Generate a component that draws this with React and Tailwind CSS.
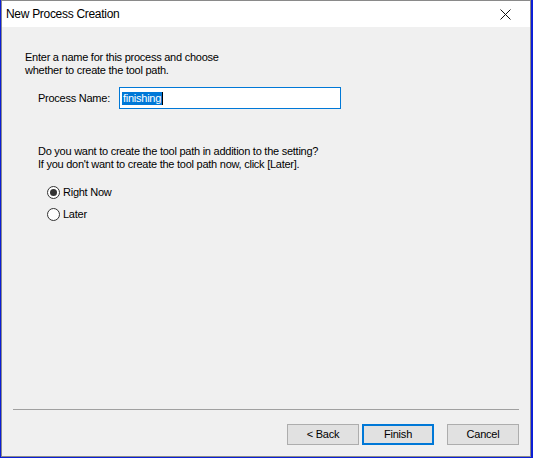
import { useState } from "react";

function Radio({ checked, label, onClick }) {
  return (
    <div className="flex items-center gap-[3px] cursor-default" onClick={onClick}>
      <span className="w-[13px] h-[13px] rounded-full border border-[#333] bg-white flex items-center justify-center">
        {checked && <span className="w-[7px] h-[7px] rounded-full bg-[#333]" />}
      </span>
      <span>{label}</span>
    </div>
  );
}

function Btn({ children, primary }) {
  return (
    <button
      className={
        "w-[72px] h-[21px] bg-[#e1e1e1] text-[#000] flex items-center justify-center " +
        (primary ? "border-2 border-[#0078d7]" : "border border-[#adadad]")
      }
    >
      {children}
    </button>
  );
}

export default function App() {
  const [mode, setMode] = useState("now");

  return (
    <div className="w-[533px] h-[458px] bg-[#0b1ed6] pl-[1px] pr-[2px] pb-[1px] flex">
      <div
        className="flex-1 flex flex-col border border-[#8a8a8a] bg-[#f0f0f0] text-[12px] text-black"
        style={{ fontFamily: '"Liberation Sans", Arial, sans-serif' }}
      >
        {/* title bar */}
        <div className="h-[26px] bg-white flex items-center justify-between pl-[4px] pr-[19px] shrink-0">
          <span className="text-[12px] tracking-[-0.3px] text-[#000]">New Process Creation</span>
          <svg width="11" height="11" viewBox="0 0 11 11" className="mt-[1px]">
            <path d="M0.5 0.5 L10.5 10.5 M10.5 0.5 L0.5 10.5" stroke="#111" strokeWidth="1" />
          </svg>
        </div>

        {/* body */}
        <div className="flex-1 flex flex-col pl-[23px] pt-[24px] leading-[13px] text-[11px] tracking-[-0.25px]">
          <p>Enter a name for this process and choose</p>
          <p>whether to create the tool path.</p>

          <div className="flex items-center mt-[10px] pl-[13px]">
            <span className="w-[81px]">Process Name:</span>
            <div className="w-[222px] h-[22px] border border-[#0078d7] bg-white flex items-center pl-[2px]">
              <span className="bg-[#0078d7] text-white px-[1px] leading-[13px]">finishing</span>
              <span className="w-[1px] h-[13px] bg-black" />
            </div>
          </div>

          <div className="pl-[13px] mt-[36px]">
            <p>Do you want to create the tool path in addition to the setting?</p>
            <p>If you don't want to create the tool path now, click [Later].</p>
          </div>

          <div className="pl-[22px] mt-[15px] flex flex-col gap-[9px]">
            <Radio checked={mode === "now"} label="Right Now" onClick={() => setMode("now")} />
            <Radio checked={mode === "later"} label="Later" onClick={() => setMode("later")} />
          </div>
        </div>

        {/* footer */}
        <div className="shrink-0 px-[11px]">
          <div className="h-[2px] border-t border-[#a0a0a0] border-b-white" />
        </div>
        <div className="shrink-0 flex justify-end items-center gap-[3px] pr-[11px] pt-[13px] pb-[11px] text-[11px] tracking-[-0.2px]">
          <Btn>&lt; Back</Btn>
          <Btn primary>Finish</Btn>
          <div className="w-[7px]" />
          <Btn>Cancel</Btn>
        </div>
      </div>
    </div>
  );
}
